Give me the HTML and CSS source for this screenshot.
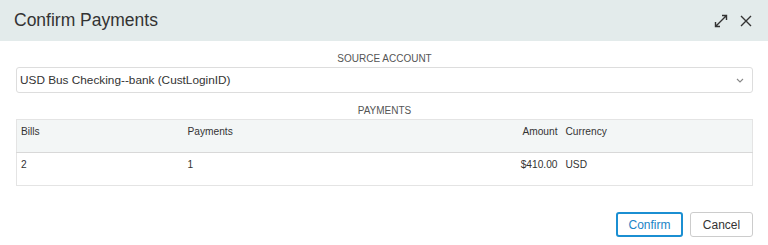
FILE: index.html
```html
<!DOCTYPE html>
<html lang="en">
<head>
    <meta charset="UTF-8">
    <meta name="viewport" content="width=device-width, initial-scale=1.0">
    <title>Confirm Payments</title>
    <link rel="stylesheet" href="styles.css">
</head>
<body>
    <div class="dialog">
        <header class="dialog-header">
            <h1>Confirm Payments</h1>
            <div class="header-tools">
                <svg class="tool-icon" width="16" height="16" viewBox="0 0 16 16">
                    <path d="M2.5 13.5 L13.5 2.5 M9 2.5 H13.5 V7 M2.5 9 V13.5 H7" fill="none" stroke="#333" stroke-width="1.4"/>
                </svg>
                <svg class="tool-icon" width="14" height="14" viewBox="0 0 14 14">
                    <path d="M2 2 L12 12 M12 2 L2 12" fill="none" stroke="#333" stroke-width="1.4"/>
                </svg>
            </div>
        </header>

        <div class="dialog-body">
            <div class="section-label">Source Account</div>
            <div class="select-box">
                <span>USD Bus Checking--bank (CustLoginID)</span>
                <svg width="8" height="5" viewBox="0 0 8 5">
                    <path d="M1 1 L4 4 L7 1" fill="none" stroke="#888" stroke-width="1.1"/>
                </svg>
            </div>

            <div class="section-label">Payments</div>
            <table class="payments">
                <colgroup>
                    <col class="col-bills">
                    <col>
                    <col class="col-amount">
                    <col class="col-currency">
                </colgroup>
                <thead>
                    <tr>
                        <th>Bills</th>
                        <th>Payments</th>
                        <th class="num">Amount</th>
                        <th>Currency</th>
                    </tr>
                </thead>
                <tbody>
                    <tr>
                        <td>2</td>
                        <td>1</td>
                        <td class="num">$410.00</td>
                        <td>USD</td>
                    </tr>
                </tbody>
            </table>
        </div>

        <div class="dialog-footer">
            <button class="btn btn-primary">Confirm</button>
            <button class="btn">Cancel</button>
        </div>
    </div>
</body>
</html>
```

FILE: styles.css
```css
body {
    font-family: "Liberation Sans", Arial, sans-serif;
    margin: 0;
    padding: 0;
    background-color: #fff;
    color: #333;
}

.dialog {
    width: 768px;
    height: 245px;
    display: flex;
    flex-direction: column;
}

.dialog-header {
    height: 41px;
    background-color: #e3ebeb;
    display: flex;
    align-items: center;
    justify-content: space-between;
    padding: 0 15px 0 14px;
}

.dialog-header h1 {
    margin: 0;
    font-size: 17.5px;
    font-weight: normal;
    color: #333;
}

.header-tools {
    display: flex;
    align-items: center;
    gap: 10px;
}

.tool-icon {
    display: block;
}

.dialog-body {
    padding: 12px 15px 0 16px;
}

.section-label {
    text-align: center;
    text-transform: uppercase;
    font-size: 10px;
    color: #555;
    line-height: 12px;
    margin-bottom: 2px;
}

.select-box {
    height: 24px;
    border: 1px solid #ddd;
    border-radius: 3px;
    display: flex;
    align-items: center;
    justify-content: space-between;
    padding: 0 8px 0 3px;
    font-size: 11.8px;
    color: #333;
    margin-bottom: 12px;
}

.payments {
    width: 100%;
    border-collapse: collapse;
    table-layout: fixed;
    border: 1px solid #e4e4e4;
    font-size: 10.2px;
    color: #333;
}

.col-bills {
    width: 167px;
}

.col-amount {
    width: 100px;
}

.col-currency {
    width: 191px;
}

.payments th,
.payments td {
    text-align: left;
    font-weight: normal;
    vertical-align: top;
    padding: 6px 4px;
    height: 20px;
}

.payments thead tr {
    background-color: #f3f6f6;
    border-bottom: 1px solid #d8d8d8;
}

.payments .num {
    text-align: right;
}

.dialog-footer {
    margin-top: auto;
    display: flex;
    justify-content: flex-end;
    gap: 7px;
    padding: 0 15px 8px 0;
}

.btn {
    font-family: inherit;
    font-size: 12px;
    height: 25px;
    width: 63px;
    padding: 0;
    background: #fff;
    color: #333;
    border: 1px solid #ccc;
    border-radius: 3px;
}

.btn-primary {
    color: #1b84c6;
    border: 2px solid #1b8fd2;
    width: 67px;
}
```
